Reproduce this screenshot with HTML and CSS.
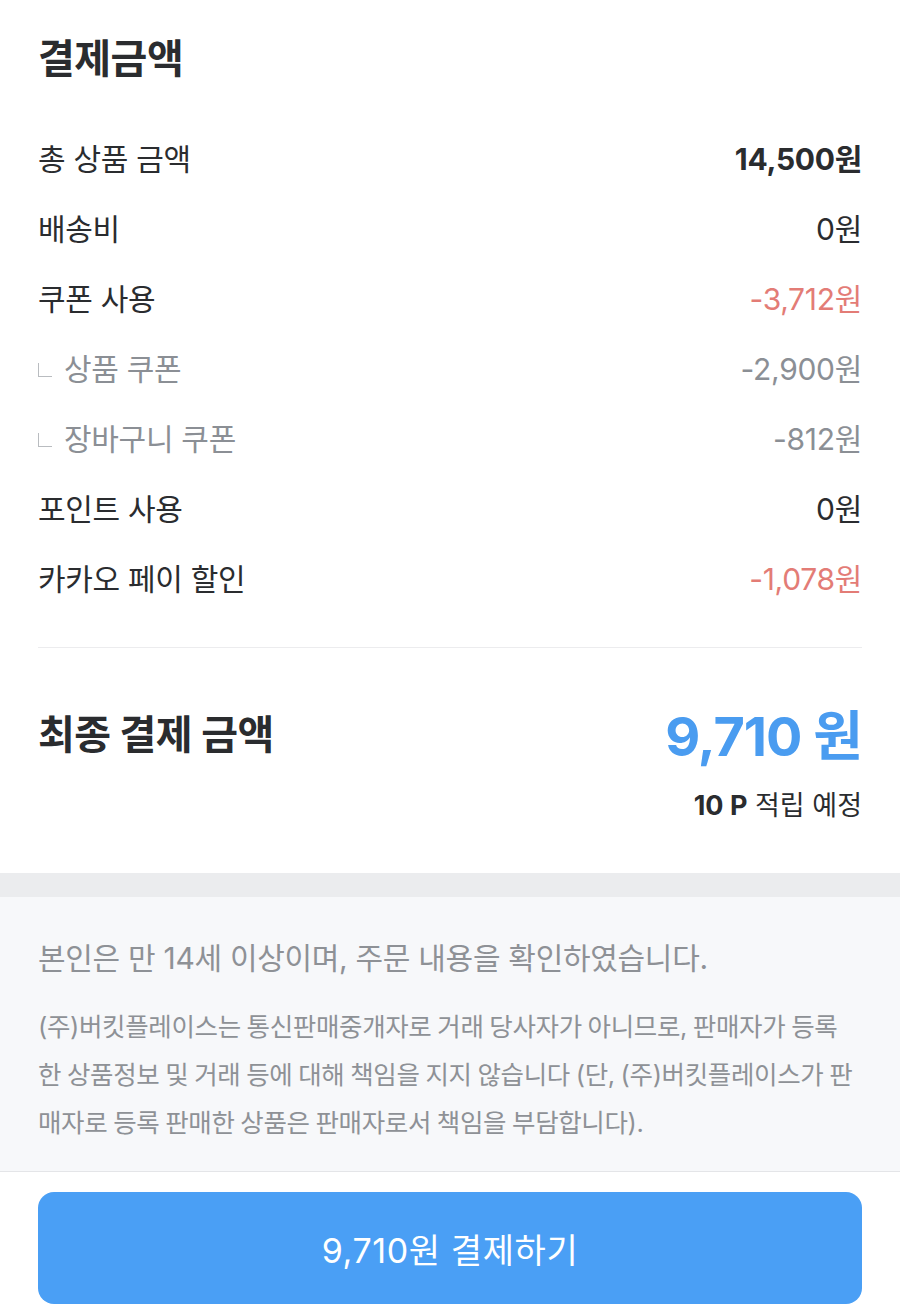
FILE: index.html
```html
<!DOCTYPE html>
<html lang="ko">
<head>
<meta charset="utf-8">
<link rel="stylesheet" href="styles.css">
</head>
<body>
<section class="summary">
  <h1 class="title">결제금액</h1>
  <div class="rows">
    <div class="row"><span class="label">총 상품 금액</span><span class="value strong">14,500원</span></div>
    <div class="row"><span class="label">배송비</span><span class="value">0원</span></div>
    <div class="row"><span class="label">쿠폰 사용</span><span class="value red">-3,712원</span></div>
    <div class="row sub"><span class="label"><span class="branch"></span>상품 쿠폰</span><span class="value">-2,900원</span></div>
    <div class="row sub"><span class="label"><span class="branch"></span>장바구니 쿠폰</span><span class="value">-812원</span></div>
    <div class="row"><span class="label">포인트 사용</span><span class="value">0원</span></div>
    <div class="row"><span class="label">카카오 페이 할인</span><span class="value red">-1,078원</span></div>
  </div>
  <div class="final">
    <div class="final-row">
      <span class="final-label">최종 결제 금액</span>
      <span class="final-value">9,710 원</span>
    </div>
    <div class="points"><b>10 P</b> 적립 예정</div>
  </div>
</section>
<div class="band"></div>
<section class="notice">
  <p class="agree">본인은 만 14세 이상이며, 주문 내용을 확인하였습니다.</p>
  <p class="legal">(주)버킷플레이스는 통신판매중개자로 거래 당사자가 아니므로, 판매자가 등록<br>한 상품정보 및 거래 등에 대해 책임을 지지 않습니다 (단, (주)버킷플레이스가 판<br>매자로 등록 판매한 상품은 판매자로서 책임을 부담합니다).</p>
</section>
<footer class="pay-bar">
  <button class="pay-btn" type="button">9,710원 결제하기</button>
</footer>
</body>
</html>
```

FILE: styles.css
```css
* { box-sizing: border-box; }
html, body { margin: 0; padding: 0; }
body {
  width: 900px;
  background: #ffffff;
  font-family: Inter, "Noto Sans CJK KR", sans-serif;
  color: #2a2c2f;
}
.summary {
  padding: 32px 38px 0;
}
.title {
  margin: 0;
  font-size: 40px;
  font-weight: 700;
  line-height: 54px;
  letter-spacing: -0.5px;
  color: #2a2c2f;
}
.rows {
  margin-top: 36px;
  padding-bottom: 35px;
  border-bottom: 1px solid #ececee;
}
.row {
  height: 70px;
  display: flex;
  align-items: center;
  justify-content: space-between;
  font-size: 30px;
  letter-spacing: -0.3px;
}
.label { display: flex; align-items: center; color: #2a2c2f; }
.value { color: #2a2c2f; }
.value.strong { font-weight: 700; }
.value.red { color: #e37c76; }
.row.sub .label, .row.sub .value { color: #8b8f95; }
.branch {
  width: 14px;
  height: 14px;
  border-left: 1.5px solid #b9bcc0;
  border-bottom: 1.5px solid #b9bcc0;
  margin: 0 12px 0 0;
  transform: translateY(3px);
}
.final {
  padding: 50px 0 48px;
}
.final-row {
  display: flex;
  align-items: center;
  justify-content: space-between;
  height: 68px;
}
.final-label {
  font-size: 40px;
  font-weight: 700;
  letter-spacing: -0.5px;
}
.final-value {
  font-size: 54px;
  font-weight: 700;
  color: #4a9cf0;
  letter-spacing: -1px;
}
.points {
  margin-top: 20px;
  text-align: right;
  font-size: 27px;
  line-height: 39px;
  letter-spacing: 0;
}
.points b { font-weight: 700; }
.band {
  height: 24px;
  background: #ebecee;
}
.notice {
  background: #f7f8fa;
  padding: 41px 38px 24px;
  border-bottom: 1px solid #e4e5e8;
  color: #8e9196;
}
.agree {
  margin: 0;
  font-size: 30px;
  line-height: 40px;
  letter-spacing: -0.3px;
}
.legal {
  margin: 25px 0 0;
  font-size: 25.5px;
  line-height: 48px;
  letter-spacing: -0.35px;
  word-spacing: -1px;
  white-space: nowrap;
}
.pay-bar {
  padding: 20px 38px 7px;
}
.pay-btn {
  display: block;
  width: 100%;
  height: 112px;
  border: none;
  border-radius: 16px;
  background: #4a9ff5;
  color: #ffffff;
  font-family: Inter, "Noto Sans CJK KR", sans-serif;
  font-size: 34px;
  letter-spacing: 0.6px;
}
```
